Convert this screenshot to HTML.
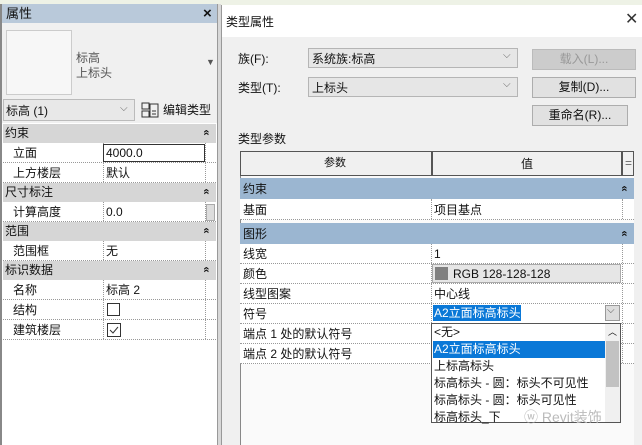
<!DOCTYPE html>
<html><head><meta charset="utf-8"><style>
*{margin:0;padding:0;box-sizing:border-box}
body{width:642px;height:445px;overflow:hidden;position:relative;background:#f0f0f0;font-family:"Liberation Sans","Noto Sans CJK SC",sans-serif;font-size:12px;color:#111}
.a{position:absolute}
.t{position:absolute;white-space:nowrap;line-height:1}
.ch{position:absolute;font-size:11px;font-weight:bold;transform:rotate(-90deg);line-height:1}
.grp{position:absolute;left:3px;width:213px;height:19px;background:#d6d6d6}
.row{position:absolute;left:3px;width:213px;height:20px;background:#fff;border-bottom:1px dotted #999}
.row .c2{position:absolute;left:100px;top:0;bottom:0;border-left:1px dotted #999}
.row .c3{position:absolute;left:202px;top:0;bottom:0;border-left:1px dotted #999}
.tr{position:absolute;left:240px;width:394px;background:#fff;border-bottom:1px dotted #999}
.tr .c2{position:absolute;left:191px;top:0;bottom:0;border-left:1px dotted #999}
.tr .c3{position:absolute;left:382px;top:0;bottom:0;border-left:1px dotted #999}
.tg{position:absolute;left:240px;width:394px;height:21px;background:#9bb6d1}
.btn{position:absolute;background:#e1e1e1;border:1px solid #adadad;text-align:center;line-height:18px;font-size:12px}
.cb{position:absolute;background:#e6e6e6;border:1px solid #b5b5b5;height:20px}
.li{position:absolute;left:433px;width:172px;height:17px;line-height:17px;padding-left:1px}
</style></head><body>
<div class="a" style="left:0;top:0;width:642px;height:5px;background:#eef2e6"></div>
<div class="a" style="left:0;top:4px;width:218px;height:441px;background:#fff;border-left:2px solid #888;border-right:1px solid #999"></div>
<div class="a" style="left:2px;top:4px;width:215px;height:19px;background:#b9c9da"></div>
<div class="t" style="left:6px;top:7px;font-size:13px">属性</div>
<div class="t" style="left:203px;top:6px;font-weight:bold;font-size:15px">×</div>
<div class="a" style="left:2px;top:23px;width:215px;height:76px;background:#f0f0f0"></div>
<div class="a" style="left:6px;top:30px;width:66px;height:65px;background:#f7f7f7;border:1px solid #ccc"></div>
<div class="t" style="left:76px;top:52px;color:#555">标高</div>
<div class="t" style="left:76px;top:67px;color:#555">上标头</div>
<div class="t" style="left:206px;top:58px;font-size:9px;color:#555">▼</div>
<div class="a" style="left:2px;top:99px;width:215px;height:24px;background:#f0f0f0"></div>
<div class="a" style="left:3px;top:99px;width:132px;height:22px;background:#e8e8e8;border:1px solid #bbb"></div>
<div class="t" style="left:6px;top:105px">标高 (1)</div>
<div class="t" style="left:120px;top:104px;font-size:10px;color:#666">⌵</div>
<svg class="a" style="left:141px;top:101px" width="18" height="18"><rect x="1" y="2" width="7" height="6" fill="none" stroke="#333"/><rect x="1" y="10" width="7" height="6" fill="none" stroke="#333"/><rect x="9" y="3" width="8" height="13" fill="none" stroke="#333"/><path d="M11 10h4M11 13h4" stroke="#333"/></svg>
<div class="t" style="left:163px;top:104px">编辑类型</div>
<div class="grp" style="top:124px"></div><div class="t" style="left:5px;top:127px">约束</div><div class="ch" style="left:204px;top:127px">»</div>
<div class="row" style="top:143px"><div class="c2"></div><div class="c3"></div></div><div class="t" style="left:13px;top:147px">立面</div>
<div class="a" style="left:103px;top:144px;width:102px;height:18px;border:1px solid #333;background:#fff"></div><div class="t" style="left:106px;top:147px">4000.0</div>
<div class="row" style="top:163px"><div class="c2"></div><div class="c3"></div></div><div class="t" style="left:13px;top:167px">上方楼层</div><div class="t" style="left:106px;top:167px">默认</div>
<div class="grp" style="top:183px"></div><div class="t" style="left:5px;top:186px">尺寸标注</div><div class="ch" style="left:204px;top:186px">»</div>
<div class="row" style="top:202px"><div class="c2"></div><div class="c3"></div></div><div class="t" style="left:13px;top:206px">计算高度</div><div class="t" style="left:106px;top:206px">0.0</div>
<div class="a" style="left:206px;top:204px;width:9px;height:17px;background:#ddd;border:1px solid #aaa"></div>
<div class="grp" style="top:222px"></div><div class="t" style="left:5px;top:225px">范围</div><div class="ch" style="left:204px;top:225px">»</div>
<div class="row" style="top:241px"><div class="c2"></div><div class="c3"></div></div><div class="t" style="left:13px;top:245px">范围框</div><div class="t" style="left:106px;top:245px">无</div>
<div class="grp" style="top:261px"></div><div class="t" style="left:5px;top:264px">标识数据</div><div class="ch" style="left:204px;top:264px">»</div>
<div class="row" style="top:280px"><div class="c2"></div><div class="c3"></div></div><div class="t" style="left:13px;top:284px">名称</div><div class="t" style="left:106px;top:284px">标高 2</div>
<div class="row" style="top:300px"><div class="c2"></div><div class="c3"></div></div><div class="t" style="left:13px;top:304px">结构</div>
<div class="a" style="left:107px;top:303px;width:13px;height:13px;border:1px solid #333;background:#fff"></div>
<div class="row" style="top:320px"><div class="c2"></div><div class="c3"></div></div><div class="t" style="left:13px;top:324px">建筑楼层</div>
<svg class="a" style="left:107px;top:323px" width="14" height="14"><rect x="0.5" y="0.5" width="13" height="13" fill="#fff" stroke="#333"/><path d="M3 7l3 3 5-6" fill="none" stroke="#333"/></svg>
<div class="a" style="left:218px;top:4px;width:3px;height:441px;background:#d8d8d8"></div>
<div class="a" style="left:221px;top:5px;width:421px;height:440px;background:#f0f0f0;border-left:1px solid #999"></div>
<div class="a" style="left:222px;top:5px;width:420px;height:32px;background:#fff"></div>
<div class="t" style="left:226px;top:16px">类型属性</div>
<div class="t" style="left:625px;top:12px;font-size:16px;color:#333;font-weight:300">✕</div>
<div class="t" style="left:238px;top:53px">族(F):</div>
<div class="cb" style="left:308px;top:48px;width:210px"></div><div class="t" style="left:312px;top:53px">系统族:标高</div><div class="t" style="left:503px;top:51px;font-size:10px;color:#666">⌵</div>
<div class="btn" style="left:532px;top:49px;width:104px;height:21px;background:#ccc;border-color:#bbb;color:#999">载入(L)...</div>
<div class="t" style="left:238px;top:82px">类型(T):</div>
<div class="cb" style="left:308px;top:77px;width:210px"></div><div class="t" style="left:312px;top:82px">上标头</div><div class="t" style="left:503px;top:80px;font-size:10px;color:#666">⌵</div>
<div class="btn" style="left:532px;top:77px;width:104px;height:21px">复制(D)...</div>
<div class="btn" style="left:532px;top:105px;width:96px;height:21px">重命名(R)...</div>
<div class="t" style="left:238px;top:133px">类型参数</div>
<div class="a" style="left:240px;top:151px;width:394px;height:294px;background:#fafafa;border-left:1px solid #888"></div>
<div class="a" style="left:240px;top:151px;width:394px;height:25px;background:#f0f0f0;border:1px solid #555"></div>
<div class="a" style="left:431px;top:151px;width:2px;height:25px;background:#555"></div>
<div class="a" style="left:621px;top:151px;width:2px;height:25px;background:#555"></div>
<div class="t" style="left:324px;top:158px;font-size:11px">参数</div>
<div class="t" style="left:521px;top:158px">值</div>
<div class="t" style="left:625px;top:157px;color:#666">=</div>
<div class="tg" style="top:178px"></div><div class="t" style="left:243px;top:183px">约束</div><div class="ch" style="left:622px;top:183px">»</div>
<div class="tr" style="top:199px;height:21px"><div class="c2"></div><div class="c3"></div></div><div class="t" style="left:243px;top:204px">基面</div><div class="t" style="left:434px;top:204px">项目基点</div>
<div class="tg" style="top:223px"></div><div class="t" style="left:243px;top:228px">图形</div><div class="ch" style="left:622px;top:228px">»</div>
<div class="tr" style="top:244px;height:20px"><div class="c2"></div><div class="c3"></div></div><div class="t" style="left:243px;top:248px">线宽</div><div class="t" style="left:434px;top:248px">1</div>
<div class="tr" style="top:264px;height:20px"><div class="c2"></div><div class="c3"></div></div><div class="t" style="left:243px;top:268px">颜色</div>
<div class="a" style="left:432px;top:264px;width:189px;height:19px;background:#e6e6e6;border:1px solid #aaa"></div>
<div class="a" style="left:435px;top:267px;width:13px;height:13px;background:#808080"></div><div class="t" style="left:453px;top:268px">RGB 128-128-128</div>
<div class="tr" style="top:284px;height:20px"><div class="c2"></div><div class="c3"></div></div><div class="t" style="left:243px;top:288px">线型图案</div><div class="t" style="left:434px;top:288px">中心线</div>
<div class="tr" style="top:304px;height:20px"><div class="c2"></div><div class="c3"></div></div><div class="t" style="left:243px;top:308px">符号</div>
<div class="a" style="left:433px;top:305px;width:88px;height:16px;background:#0a78d7"></div><div class="t" style="left:434px;top:307px;color:#fff">A2立面标高标头</div>
<div class="a" style="left:605px;top:305px;width:15px;height:16px;background:#ddd;border:1px solid #999"></div><div class="t" style="left:607px;top:306px;font-size:10px;color:#555">⌵</div>
<div class="tr" style="top:324px;height:20px"><div class="c2"></div><div class="c3"></div></div><div class="t" style="left:243px;top:328px">端点 1 处的默认符号</div>
<div class="tr" style="top:344px;height:20px"><div class="c2"></div><div class="c3"></div></div><div class="t" style="left:243px;top:348px">端点 2 处的默认符号</div>
<div class="a" style="left:431px;top:323px;width:190px;height:100px;background:#fff;border:1px solid #555;overflow:hidden">
<div class="a" style="left:173px;top:0;width:15px;height:98px;background:#f0f0f0"></div>
<div class="a" style="left:174px;top:17px;width:13px;height:46px;background:#c2c2c2"></div>
<div class="t" style="left:176px;top:4px;font-size:9px">︿</div>
</div>
<div class="li" style="top:324px">&lt;无&gt;</div>
<div class="li" style="top:341px;background:#0a78d7;color:#fff">A2立面标高标头</div>
<div class="li" style="top:358px">上标高标头</div>
<div class="li" style="top:375px">标高标头 - 圆：标头不可见性</div>
<div class="li" style="top:392px">标高标头 - 圆：标头可见性</div>
<div class="li" style="top:409px">标高标头_下</div>
<div class="t" style="left:524px;top:410px;font-size:14px;color:#bbb">ⓦ Revit装饰</div>
</body></html>
